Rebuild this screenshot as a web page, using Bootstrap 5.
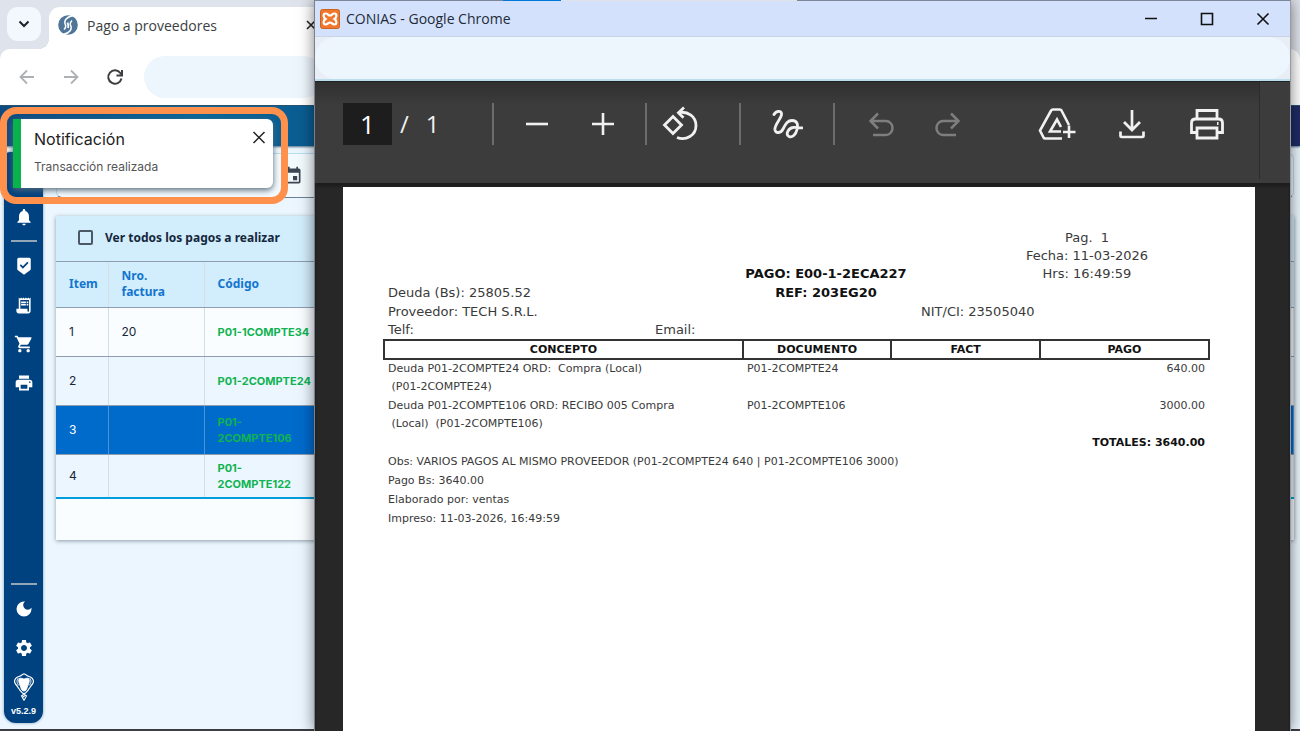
<!DOCTYPE html>
<html lang="es">
<head>
<meta charset="utf-8">
<meta name="viewport" content="width=device-width, initial-scale=1">
<title>Pago a proveedores</title>
<link href="https://cdn.jsdelivr.net/npm/bootstrap@5.3.0/dist/css/bootstrap.min.css" rel="stylesheet">
<style>
  body { font-family: Inter, "Liberation Sans", sans-serif; font-size: 12px; background: #ebf6fe; overflow: hidden; }
  svg { display: block; flex: none; }
  .plain { background: none; border: 0; padding: 0; color: inherit; display: flex; align-items: center; justify-content: center; }
  .desk { height: 100vh; border-bottom: 2px solid #3b3d40; }

  /* main browser window */
  .tabstrip { height: 49px; background: #dfe3eb; padding-left: 7px; }
  .tab-menu { width: 34px; height: 34px; margin: 7px 8px 0 0; border-radius: 11px; background: #f3f7fe; color: #1f2023; }
  .tab-active { width: 400px; margin-top: 7px; padding: 0 0 6px 9px; background: #fff; border-radius: 11px 11px 0 0; font: 14px "Open Sans", sans-serif; color: #3c3e42; position: relative; gap: 9px; }
  .tab-active::before { content: ""; position: absolute; left: -10px; bottom: 0; width: 10px; height: 10px; background: radial-gradient(circle at 0 0, transparent 10px, #fff 10px); }
  .tab-close { margin-left: 80px; color: #222; }
  .navrow { height: 57px; background: #fff; border-radius: 10px 10px 0 0; border-bottom: 1px solid #27506e; padding: 0 0 0 18px; gap: 26px; color: #aeb0b3; }
  .navwrap { background: #dfe3eb; }
  .reload { color: #3c3e42; }
  .address { height: 42px; width: 180px; border: 0; border-radius: 21px; background: #edf5fd; margin-left: -6px; }
  .apphead { height: 40px; background: linear-gradient(90deg, #0d4a80 0, #0a6699 200px, #0a5b90 320px, #1f2b66 1200px); box-shadow: 0 1px 2px #4b6c85; }

  .siderail { flex: none; width: 39px; margin: 6px 0 6px 4px; background: #00427f; color: #fff; border-radius: 6px 6px 12px 12px; box-shadow: 0 0 3px #7795ad; padding: 55px 0 6px; }
  .siderail a { color: #fff; height: 20px; display: flex; justify-content: center; align-items: center; text-decoration: none; }
  .side-set { gap: 19px; }
  .rule { width: 26px; height: 2px; background: #93a6b8; margin: 13px auto 14px; }
  .ver { font-size: 9px; line-height: 12px; font-weight: 600; margin-top: 8px; font-family: "Liberation Sans", sans-serif; font-weight: 700; }
  .content-area { padding: 7px 6px 0 13px; }
  .datebox { height: 45px; border: 1px solid #b7dff4; border-bottom-color: #6b8093; border-radius: 6px; background: #f3fafe; margin-bottom: 18px; padding-left: 10px; color: #3b4652; }
  .datebox input { width: 216px; background: none; border: 0; }
  .sheet { background: #f9fdff; box-shadow: 0 1px 4px #8c9ba8; }
  .sheet-top { height: 46px; background: #d2edfc; padding: 0 0 2px 22px; gap: 12px; font: bold 12px "Noto Sans", sans-serif; color: #15273d; border-bottom: 1px solid #8e9db0; }
  .sheet-top input { appearance: none; width: 15px; height: 15px; border: 2px solid #4d5866; border-radius: 2px; margin: 0; }
  .sheet-foot { height: 41px; }
  .grid-t { width: 100%; table-layout: fixed; line-height: 16px; color: #18263a; border-bottom: 2px solid #009ddc; }
  .grid-t th { background: #d2edfc; color: #1275cf; font: bold 12px/16px "Noto Sans", sans-serif; height: 45px; }
  .grid-t th, .grid-t td { padding: 0 13px; border-bottom: 1px solid #8e9db0; border-right: 1px solid #d2dfe8; }
  .grid-t tbody tr { height: 49px; }
  .grid-t tbody tr:nth-child(2), .grid-t tbody tr:nth-child(4) { background: #ecf6fe; }
  .grid-t tbody tr:last-child { height: 44px; }
  .grid-t tbody tr:last-child td { border-bottom: 0; }
  .grid-t tbody tr.picked { background: #006bcb; color: #fff; }
  .grid-t .picked td { border-right-color: #4f92d4; }
  .grid-t .code { color: #10b351; font-size: 11px; font-weight: 700; }
  .c1 { width: 52px; } .c2 { width: 96px; }

  /* toast and the frame drawn round it */
  .halo { position: absolute; left: 0; top: 107px; width: 288px; border: 7px solid #ff914d; border-radius: 16px; padding: 5px 8px 9px 6px; z-index: 4; }
  .notice { height: 69px; background: #fff; border-left: 8px solid #08b34b; border-radius: 0 6px 6px 0; padding: 10px 7px 0 13px; box-shadow: 0 2px 6px #53687a; }
  .notice h1 { font-size: 16px; line-height: 20px; font-weight: 400; color: #222; margin: 0 0 10px; }
  .notice p { font-size: 12px; line-height: 16px; color: #555; margin: 0; }

  /* floating print window */
  .popwin { position: absolute; left: 314px; right: 9px; top: 0; bottom: 0; z-index: 3; background: #272727; border-left: 1px solid #77808c; border-right: 1px solid #989ca2; box-shadow: 0 0 14px rgba(0, 0, 0, .5); }
  .edge { height: 1px; background: linear-gradient(90deg, #7d8799 188px, #0078d7 188px 246px, #dfe3e8 246px 482px, #7d8799 482px); }
  .titlebar { height: 36px; background: #d3e1fc; padding: 0 18px 0 5px; font: 14px "Open Sans", sans-serif; color: #222b38; border-bottom: 1px solid #c8d3e4; gap: 6px; }
  .wctl { gap: 38px; color: #111; }
  .urlrow { height: 44px; background: #e9edf6; border-bottom: 2px solid #b9dfef; }
  .urlrow input { width: 100%; height: 42px; border: 0; border-radius: 21px; background: #edf5fd; display: block; }
  .pdfbar { height: 102px; background: linear-gradient(#303030, #3c3c3c 24px); border-top: 1px solid #222; padding: 0 65px 17px 28px; color: #f1f1f1; font-family: "Open Sans", sans-serif; }
  .pdfbar button { width: 36px; height: 36px; }
  .pageno { width: 49px; height: 42px; border: 0; background: #1d1d1d; color: #fff; text-align: center; font-size: 26px; padding: 0; }
  .total { width: 100px; padding-left: 8px; font-size: 24px; gap: 17px; }
  .bar { width: 2px; height: 42px; background: #6c6c6c; }
  .zooms { padding: 0 24px 0 25px; gap: 30px; } .turn { padding: 0 41px 0 15px; } .ink { padding: 0 28px; } .undo { padding-left: 28px; gap: 31px; color: #7e7e7e; } .outs { gap: 39px; }
  .viewer { padding: 4px 35px 0 28px; box-shadow: inset 0 3px 3px #1c1c1c; overflow: hidden; }
  .track { position: absolute; right: 0; top: 82px; width: 31px; height: 97px; background: #3c3c3c; border-left: 1px solid #2c2c2c; }
  .doc { background: #fff; min-height: 100%; padding: 42px 45px 0 40px; font: 11px/18px "DejaVu Sans", sans-serif; color: #3a3a3a; }
  .doc .big { font-size: 13px; padding-left: 5px; }
  .g3 { display: grid; grid-template-columns: 314fr 248fr 260fr; }
  .g3 > :last-child { padding-left: 14px; }
  .g2a { display: grid; grid-template-columns: 533fr 289fr; }
  .g2b { display: grid; grid-template-columns: 267fr 555fr; }
  .loose { line-height: 19px; }
  .doc b { color: #111; }
  .lines { width: 100%; table-layout: fixed; }
  .lines th { border: 2px solid #333; height: 19px; line-height: 14px; padding: 0; text-align: center; color: #111; }
  .lines td { padding: 0 4px 1px; vertical-align: top; }
  .k1 { width: 43.5%; } .k2, .k3 { width: 18%; }
  .notes p { margin: 0 0 1px; padding-left: 5px; }
</style>
</head>
<body>
<div class="desk d-flex flex-column">
  <div class="tabstrip d-flex">
    <button class="plain tab-menu" aria-label="Buscar pestañas"><svg width="12" height="12" viewBox="0 0 12 12" fill="none" stroke="currentColor" stroke-width="2"><path d="M1.500 3.500 6 8l4.500-4.500"/></svg></button>
    <div class="tab-active d-flex align-items-center">
      <svg width="20" height="20" viewBox="0 0 20 20"><circle cx="10" cy="10" r="9.800" fill="#4f7599"/><path d="M15 .5C8 2 5.500 6 7.500 10c.6 1.500 0 3-1.500 4.500" fill="none" stroke="#fff" stroke-width="1.500"/><path d="M5 19.500c7-1.500 9.500-5.500 7.500-9.500-.6-1.500 0-3 1.500-4.500" fill="none" stroke="#fff" stroke-width="1.500"/><path d="M9.500 7.500c.5 2.500 1.500 3 .5 5.500" fill="none" stroke="#fff" stroke-width="1.800"/></svg>
      <span class="text-nowrap">Pago a proveedores</span>
      <button class="plain tab-close" aria-label="Cerrar pestaña"><svg width="10" height="10" viewBox="0 0 10 10" stroke="currentColor" stroke-width="1.600"><path d="m1 1 8 8M9 1 1 9"/></svg></button>
    </div>
  </div>
  <div class="navwrap">
    <div class="navrow d-flex align-items-center">
      <button class="plain" aria-label="Atrás"><svg width="18" height="18" viewBox="0 0 18 18" fill="none" stroke="currentColor" stroke-width="1.800"><path d="M16 9H3M9 2.500 2.500 9 9 15.500"/></svg></button>
      <button class="plain" aria-label="Adelante"><svg width="18" height="18" viewBox="0 0 18 18" fill="none" stroke="currentColor" stroke-width="1.800"><path d="M2 9h13M9 2.500 15.500 9 9 15.500"/></svg></button>
      <button class="plain reload" aria-label="Recargar"><svg width="18" height="18" viewBox="0 0 18 18" fill="none" stroke="currentColor" stroke-width="2"><path d="M15.500 10.500A6.700 6.700 0 1 1 14.500 5.200L15.800 7"/><path d="M16 2v5.500h-5.500"/></svg></button>
      <input class="address" aria-label="Dirección">
    </div>
  </div>
  <div class="apphead"></div>

  <div class="d-flex flex-grow-1">
    <nav class="siderail d-flex flex-column">
      <a href="#" aria-label="Avisos"><svg width="20" height="20" viewBox="0 0 24 24" fill="currentColor"><path d="M12 22c1.100 0 2-.9 2-2h-4c0 1.100.89 2 2 2zm6-6v-5c0-3.070-1.640-5.640-4.500-6.320V4c0-.83-.67-1.500-1.500-1.500s-1.500.67-1.500 1.500v.68C7.630 5.360 6 7.920 6 11v5l-2 2v1h16v-1l-2-2z"/></svg></a>
      <div class="rule"></div>
      <div class="side-set d-flex flex-column">
        <a href="#" aria-label="Control"><svg width="18" height="18" viewBox="0 0 24 24" fill="currentColor" fill-rule="evenodd"><path d="M5 1h14a2 2 0 0 1 2 2v13c0 .7-.35 1.300-.9 1.700L12 23.500l-8.100-5.800A2 2 0 0 1 3 16V3a2 2 0 0 1 2-2zm5.500 14.500 7.500-7.500-1.600-1.600-5.900 5.900-2.600-2.600L6.300 11.300z"/></svg></a>
        <a href="#" aria-label="Recibos"><svg width="19" height="19" viewBox="0 0 24 24" fill="currentColor" fill-rule="evenodd"><path d="M19.500 3.500 18 2l-1.500 1.500L15 2l-1.500 1.500L12 2l-1.500 1.500L9 2 7.500 3.500 6 2v14H3v3c0 1.660 1.340 3 3 3h12c1.660 0 3-1.340 3-3V2l-1.500 1.500zM19 19c0 .55-.45 1-1 1s-1-.45-1-1v-3H8V5h11v14z"/><path d="M9 7h6v2H9zM16 7h2v2h-2zM9 10h6v2H9zM16 10h2v2h-2z"/></svg></a>
        <a href="#" aria-label="Compras"><svg width="20" height="20" viewBox="0 0 24 24" fill="currentColor"><path d="M7 18c-1.100 0-1.990.9-1.990 2S5.900 22 7 22s2-.9 2-2-.9-2-2-2zM1 2v2h2l3.600 7.590-1.350 2.450c-.16.28-.25.61-.25.96 0 1.100.9 2 2 2h12v-2H7.420c-.14 0-.25-.11-.25-.25l.03-.12.9-1.630h7.450c.75 0 1.410-.41 1.750-1.030l3.580-6.490A1 1 0 0 0 20 4H5.210l-.94-2H1zm16 16c-1.100 0-1.990.9-1.990 2s.89 2 1.990 2 2-.9 2-2-.9-2-2-2z"/></svg></a>
        <a href="#" aria-label="Imprimir"><svg width="20" height="20" viewBox="0 0 24 24" fill="currentColor"><path d="M19 8H5c-1.660 0-3 1.340-3 3v6h4v4h12v-4h4v-6c0-1.660-1.340-3-3-3zm-3 11H8v-5h8v5zm3-7c-.55 0-1-.45-1-1s.45-1 1-1 1 .45 1 1-.45 1-1 1zm-1-9H6v4h12V3z"/></svg></a>
      </div>
      <div class="mt-auto">
        <div class="rule"></div>
        <div class="side-set d-flex flex-column">
          <a href="#" aria-label="Modo oscuro"><svg width="20" height="20" viewBox="0 0 24 24" fill="currentColor"><path d="M12 3a9 9 0 1 0 9 9c0-.46-.04-.92-.1-1.360a5.390 5.390 0 0 1-4.400 2.260 5.400 5.400 0 0 1-3.140-9.800c-.44-.06-.9-.1-1.360-.1z"/></svg></a>
          <a href="#" aria-label="Ajustes"><svg width="20" height="20" viewBox="0 0 24 24" fill="currentColor"><path d="M19.140 12.940c.04-.3.06-.61.06-.94 0-.32-.02-.64-.07-.94l2.030-1.580c.18-.14.23-.41.12-.61l-1.920-3.320c-.12-.22-.37-.29-.59-.22l-2.390.96c-.5-.38-1.030-.7-1.620-.94l-.36-2.540c-.04-.24-.24-.41-.48-.41h-3.840c-.24 0-.43.17-.47.41l-.36 2.540c-.59.24-1.130.57-1.620.94l-2.390-.96c-.22-.08-.47 0-.59.22L2.740 8.870c-.12.21-.08.47.12.61l2.030 1.580c-.05.3-.09.63-.09.94s.02.64.07.94l-2.030 1.580c-.18.14-.23.41-.12.61l1.920 3.320c.12.22.37.29.59.22l2.390-.96c.5.38 1.030.7 1.620.94l.36 2.540c.05.24.24.41.48.41h3.840c.24 0 .44-.17.47-.41l.36-2.540c.59-.24 1.130-.56 1.620-.94l2.390.96c.22.08.47 0 .59-.22l1.920-3.320c.12-.22.07-.47-.12-.61l-2.010-1.580zM12 15.600c-1.980 0-3.600-1.620-3.600-3.600s1.620-3.600 3.600-3.600 3.600 1.620 3.600 3.600-1.620 3.600-3.600 3.600z"/></svg></a>
          <a href="#" aria-label="Inicio"><svg width="20" height="28" viewBox="0 0 20 28" fill="none" stroke="currentColor"><path d="M5.500 5.500C7 4.500 8.500 6 10 6s3-1.500 4.500-.5c1.500 1.500.5 4.500-.5 6.500s-1 6-4 6-3-4-4-6-2-5-.5-6.500z" fill="currentColor"/><path d="M10 .8C8 1.500 6 3.500 3.500 4 .5 5.500-.2 8.500 1.500 11c2.500 2.500 3.500 6 6.500 8.500M10 .8c2 .7 4 2.700 6.500 3.200 3 1.500 3.700 4.500 2 7-2.500 2.500-3.500 6-6.500 8.500" stroke-width="1.200"/><path d="M4.500 5C2.500 7 2.500 10 5 12.500M15.500 5c2 2 2 5-.5 7.500" stroke-width="1"/><path d="M8 19.500 12.500 23 10 27.200 7.500 23 12 19.500M8.500 24.500 11.500 22" stroke-width="1.100"/></svg></a>
        </div>
        <div class="ver text-center">v5.2.9</div>
      </div>
    </nav>
    <main class="content-area flex-grow-1">
      <div class="datebox d-flex align-items-center">
        <input type="text" aria-label="Fecha">
        <button class="plain" aria-label="Calendario"><svg width="20" height="20" viewBox="0 0 24 24" fill="currentColor"><path d="M17 12h-5v5h5v-5zM16 1v2H8V1H6v2H5c-1.100 0-2 .9-2 2v14c0 1.100.89 2 2 2h14c1.100 0 2-.9 2-2V5c0-1.100-.9-2-2-2h-1V1h-2zm3 18H5V8h14v11z"/></svg></button>
      </div>
      <div class="sheet">
        <label class="sheet-top d-flex align-items-center"><input type="checkbox">Ver todos los pagos a realizar</label>
        <table class="grid-t">
          <colgroup><col class="c1"><col class="c2"><col></colgroup>
          <thead><tr><th>Item</th><th>Nro. factura</th><th>Código</th></tr></thead>
          <tbody>
            <tr><td>1</td><td>20</td><td class="code">P01-1COMPTE34</td></tr>
            <tr><td>2</td><td></td><td class="code">P01-2COMPTE24</td></tr>
            <tr class="picked"><td>3</td><td></td><td class="code">P01-<br>2COMPTE106</td></tr>
            <tr><td>4</td><td></td><td class="code">P01-<br>2COMPTE122</td></tr>
          </tbody>
        </table>
        <div class="sheet-foot"></div>
      </div>
    </main>
  </div>
</div>

<section class="popwin d-flex flex-column">
  <div class="edge"></div>
  <header class="titlebar d-flex align-items-center">
    <svg width="20" height="20" viewBox="0 0 20 20"><rect x=".5" y=".5" width="19" height="19" rx="2" fill="#f0772b" stroke="#c96424"/><path d="M5.500 4.500C8 4.500 8 6.500 10 6.500s2-2 4.500-2 2.500 4 0 5.500c2.500 1.500 2.500 5.500 0 5.500s-2.500-2-4.500-2-2 2-4.500 2-2.500-4 0-5.500C3 8.500 3 4.500 5.500 4.500z" fill="none" stroke="#fff" stroke-width="2.200"/></svg>
    <span>CONIAS - Google Chrome</span>
    <div class="wctl d-flex ms-auto">
      <button class="plain" aria-label="Minimizar"><svg width="18" height="18" viewBox="0 0 18 18" stroke="currentColor" stroke-width="1.500"><path d="M3 8.500h12"/></svg></button>
      <button class="plain" aria-label="Maximizar"><svg width="18" height="18" viewBox="0 0 18 18" fill="none" stroke="currentColor" stroke-width="1.600"><path d="M3.500 3.500h11v11h-11z"/></svg></button>
      <button class="plain" aria-label="Cerrar"><svg width="18" height="18" viewBox="0 0 18 18" stroke="currentColor" stroke-width="1.600"><path d="m3.500 3.500 11 11m0-11-11 11"/></svg></button>
    </div>
  </header>
  <div class="urlrow"><input aria-label="Dirección"></div>
  <div class="pdfbar d-flex align-items-center">
    <input class="pageno" value="1" aria-label="Página"><div class="total d-flex"><span>/</span><span>1</span></div>
    <span class="bar"></span>
    <div class="zooms d-flex">
      <button class="plain" aria-label="Alejar"><svg width="24" height="24" viewBox="0 0 24 24" stroke="currentColor" stroke-width="2.600"><path d="M1 12h22"/></svg></button>
      <button class="plain" aria-label="Acercar"><svg width="24" height="24" viewBox="0 0 24 24" stroke="currentColor" stroke-width="2.600"><path d="M1 12h22M12 1v22"/></svg></button>
    </div>
    <span class="bar"></span>
    <div class="turn"><button class="plain" aria-label="Girar"><svg width="36" height="36" viewBox="0 0 36 36" fill="none" stroke="currentColor" stroke-width="2.800"><path d="M11 10.500 19.500 19 11 27.500 2.500 19zM17 6.500c9-1.500 17 4 17 13 0 10-10 15.500-19 12"/><path d="m22 1.500-5.500 5.200 5 5"/></svg></button></div>
    <span class="bar"></span>
    <div class="ink"><button class="plain" aria-label="Dibujar"><svg width="32" height="32" viewBox="0 0 32 32" fill="none" stroke="currentColor" stroke-width="2.800" stroke-linecap="round"><path d="M3 6.500C5 2.500 11 2 10.500 6.500 10 11 3 17 4 22c1 4 6 3 8-1 3-6 5-8.500 9-8.500 6 0 6 5 5 9-1 5-5 8.500-8 7-4-2-.5-8.500 4-9 2-.3 6 .3 9 .3"/></svg></button></div>
    <span class="bar"></span>
    <div class="undo d-flex">
      <button class="plain" aria-label="Deshacer"><svg width="28" height="28" viewBox="0 0 28 28" fill="none" stroke="currentColor" stroke-width="2.500"><path d="M6 25h13c3.500 0 6.500-3 6.500-7s-3-7-6.500-7H4M11 3.500 3.500 11l7.500 7.500"/></svg></button>
      <button class="plain" aria-label="Rehacer"><svg width="28" height="28" viewBox="0 0 28 28" fill="none" stroke="currentColor" stroke-width="2.500"><path d="M22 25H9c-3.500 0-6.500-3-6.500-7s3-7 6.500-7h15M17 3.500l7.500 7.500-7.500 7.500"/></svg></button>
    </div>
    <div class="outs d-flex ms-auto">
      <button class="plain" aria-label="Guardar en Drive"><svg width="38" height="34" viewBox="0 0 38 34" fill="none" stroke="currentColor" stroke-width="2.600"><path d="M31 18 23.500 3.500c-.4-.7-1-1-1.700-1h-7c-.7 0-1.300.4-1.700 1L2 23.500l3.500 7c.4.700 1 1 1.700 1H24"/><path d="m23 20-4-7.500-7 12h11M31 18.500v12.500M25 25h12.500"/></svg></button>
      <button class="plain" aria-label="Descargar"><svg width="28" height="30" viewBox="0 0 28 30" fill="none" stroke="currentColor" stroke-width="2.700"><path d="M14 1v19M6 13l8 8 8-8M2.500 22.500V27q0 1 1 1h21q1 0 1-1v-4.500"/></svg></button>
      <button class="plain" aria-label="Imprimir"><svg width="36" height="32" viewBox="0 0 36 32" fill="none" stroke="currentColor" stroke-width="2.800"><path d="M8 11V2.500h20V11M8 24.500H2.500V15q0-4 4-4h23q4 0 4 4v9.500H28M8 20h20v10H8z"/><path d="M28 15.500h1.500" stroke-width="3"/></svg></button>
    </div>
  </div>
  <div class="track"></div>
  <div class="viewer flex-grow-1">
    <article class="doc">
      <div class="big">
        <div class="g3 text-center"><span></span><span></span><span>Pag. &nbsp;1</span></div>
        <div class="g3 text-center"><span></span><span></span><span>Fecha: 11-03-2026</span></div>
        <div class="g3 text-center"><span></span><b>PAGO: E00-1-2ECA227</b><span>Hrs: 16:49:59</span></div>
        <div class="g3 loose"><span>Deuda (Bs): 25805.52</span><b class="text-center">REF: 203EG20</b><span></span></div>
        <div class="g2a loose"><span>Proveedor: TECH S.R.L.</span><span>NIT/CI: 23505040</span></div>
        <div class="g2b"><span>Telf:</span><span>Email:</span></div>
      </div>
      <table class="lines">
        <colgroup><col class="k1"><col class="k2"><col class="k3"><col></colgroup>
        <thead><tr><th>CONCEPTO</th><th>DOCUMENTO</th><th>FACT</th><th>PAGO</th></tr></thead>
        <tbody>
          <tr><td>Deuda P01-2COMPTE24 ORD: &nbsp;Compra (Local)<br>&nbsp;(P01-2COMPTE24)</td><td>P01-2COMPTE24</td><td></td><td class="text-end">640.00</td></tr>
          <tr><td>Deuda P01-2COMPTE106 ORD: RECIBO 005 Compra<br>&nbsp;(Local) &nbsp;(P01-2COMPTE106)</td><td>P01-2COMPTE106</td><td></td><td class="text-end">3000.00</td></tr>
          <tr><td colspan="4" class="text-end"><b>TOTALES: 3640.00</b></td></tr>
        </tbody>
      </table>
      <div class="notes">
        <p>Obs: VARIOS PAGOS AL MISMO PROVEEDOR (P01-2COMPTE24 640 | P01-2COMPTE106 3000)</p>
        <p>Pago Bs: 3640.00</p>
        <p>Elaborado por: ventas</p>
        <p>Impreso: 11-03-2026, 16:49:59</p>
      </div>
    </article>
  </div>
</section>

<div class="halo">
  <div class="notice d-flex align-items-start justify-content-between" role="alert">
    <div><h1>Notificación</h1><p>Transacción realizada</p></div>
    <button class="plain" aria-label="Cerrar"><svg width="14" height="16" viewBox="0 0 14 16" stroke="#222" stroke-width="1.500"><path d="m1.500 3 11 11m0-11-11 11"/></svg></button>
  </div>
</div>
<script src="https://cdn.jsdelivr.net/npm/bootstrap@5.3.0/dist/js/bootstrap.bundle.min.js"></script>
</body>
</html>
